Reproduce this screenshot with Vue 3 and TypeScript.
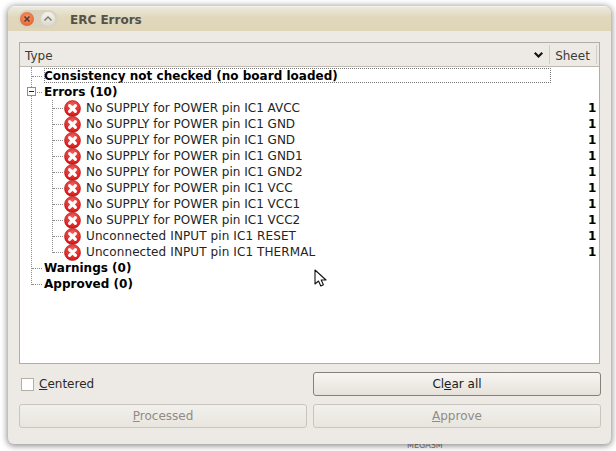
<script setup lang="ts">
interface Item { label: string; wide: boolean }
const items: Item[] = [
  'No SUPPLY for POWER pin IC1 AVCC',
  'No SUPPLY for POWER pin IC1 GND',
  'No SUPPLY for POWER pin IC1 GND',
  'No SUPPLY for POWER pin IC1 GND1',
  'No SUPPLY for POWER pin IC1 GND2',
  'No SUPPLY for POWER pin IC1 VCC',
  'No SUPPLY for POWER pin IC1 VCC1',
  'No SUPPLY for POWER pin IC1 VCC2',
  'Unconnected INPUT pin IC1 RESET',
  'Unconnected INPUT pin IC1 THERMAL',
].map((label) => ({ label, wide: label.startsWith('Unconnected') }))
</script>

<template>
  <div class="page">
    <div class="window">
      <header class="titlebar">
        <div class="controls">
          <span class="ctl close">
            <svg width="14" height="14" viewBox="0 0 14 14"><path d="M4.5 4.5l5 5M9.5 4.5l-5 5" stroke="#5a3a30" stroke-width="1.6" fill="none" /></svg>
          </span>
          <span class="ctl up">
            <svg width="14" height="14" viewBox="0 0 14 14"><path d="M3.5 8.5L7 5l3.5 3.5" stroke="#77746a" stroke-width="1.4" fill="none" /></svg>
          </span>
        </div>
        <span class="title">ERC Errors</span>
      </header>

      <div class="body">
        <section class="tree">
          <div class="head">
            <div class="col-type">
              <span>Type</span>
              <svg class="chev" width="9" height="7" viewBox="0 0 9 7"><path d="M0 1.5L1.5 0 4.5 3 7.5 0 9 1.5 4.5 6z" fill="#111" /></svg>
            </div>
            <div class="col-sheet">Sheet</div>
          </div>
          <div class="rows">
            <div class="vline outer"></div>
            <div class="vline inner"></div>
            <div class="row top"><span class="hline"></span><span class="bold focus">Consistency not checked (no board loaded)</span></div>
            <div class="row top">
              <span class="hline"></span>
              <span class="expander"><i></i></span>
              <span class="bold">Errors (10)</span>
            </div>
            <div v-for="(item, i) in items" :key="i" class="row child">
              <span class="hline2"></span>
              <svg class="err" width="17" height="17" viewBox="0 0 17 17">
                <defs>
                  <radialGradient id="redball" cx="50%" cy="30%" r="70%">
                    <stop offset="0" stop-color="#f4605a" />
                    <stop offset="1" stop-color="#d81414" />
                  </radialGradient>
                </defs>
                <circle cx="8.5" cy="8.5" r="8" fill="url(#redball)" stroke="#b81212" stroke-width="0.6" />
                <path d="M5.6 5.6l5.8 5.8M11.4 5.6l-5.8 5.8" stroke="#fff" stroke-width="3.2" stroke-linecap="round" fill="none" />
              </svg>
              <span class="label" :class="{ wide: item.wide }">{{ item.label }}</span>
              <span class="num">1</span>
            </div>
            <div class="row top"><span class="hline"></span><span class="bold">Warnings (0)</span></div>
            <div class="row top"><span class="hline"></span><span class="bold">Approved (0)</span></div>
          </div>
        </section>

        <div class="actions">
          <label class="check"><span class="box"></span><span><u>C</u>entered</span></label>
          <button class="btn strong">Cl<u>e</u>ar all</button>
          <button class="btn off"><u>P</u>rocessed</button>
          <button class="btn off"><u>A</u>pprove</button>
        </div>
      </div>
    </div>
    <svg class="cursor" width="14" height="20" viewBox="0 0 14 20"><path d="M1 1v14l3.5-3 2.3 5 2.6-1.2-2.2-4.8H12z" fill="#fff" stroke="#111" stroke-width="1.1" stroke-linejoin="round" /></svg>
    <span class="peek">MEGASM</span>
  </div>
</template>

<style>
html, body { margin: 0; background: #fff; }
</style>

<style scoped>
.page {
  position: relative;
  width: 616px;
  height: 451px;
  overflow: hidden;
  padding: 6px 5px 0 8px;
  box-sizing: border-box;
  font-family: "DejaVu Sans", sans-serif;
  font-size: 12px;
  color: #1a1a1a;
}
.window {
  position: relative;
  z-index: 1;
  width: 603px;
  height: 438px;
  border-radius: 7px 7px 6px 6px;
  background: #edeae5;
  box-shadow: 0 1px 6px 1px rgba(0, 0, 0, 0.45);
  display: flex;
  flex-direction: column;
  overflow: hidden;
}
.titlebar {
  height: 25px;
  flex: none;
  display: flex;
  align-items: center;
  padding-left: 10px;
  background: linear-gradient(#ece8dc, #e0d7bc 45%, #dfd6ba);
  border-top: 1px solid #f6f4ee;
  box-sizing: border-box;
}
.controls {
  display: flex;
  gap: 7px;
  padding: 2px 3px 2px 2px;
  border-radius: 11px;
  background: #d8d2bf;
  margin-right: 12px;
}
.ctl {
  width: 14px;
  height: 14px;
  border-radius: 50%;
  display: flex;
}
.close { background: radial-gradient(circle at 50% 40%, #f49a6c, #e0531f); }
.up { background: linear-gradient(#f5f3ee, #dcd8cf); }
.title {
  font-weight: bold;
  color: #565248;
  font-size: 12px;
  padding-top: 1px;
}
.body {
  flex: 1;
  display: flex;
  flex-direction: column;
  padding: 11px 11px 0;
}
.tree {
  height: 322px;
  box-sizing: border-box;
  border: 1px solid #b3aea5;
  background: #fff;
  flex: none;
  display: flex;
  flex-direction: column;
}
.head {
  display: flex;
  height: 24px;
  flex: none;
  background: #edeae5;
  border-bottom: 1px solid #bdb9b0;
  box-sizing: border-box;
  color: #3b3a36;
}
.col-type {
  flex: 1;
  display: flex;
  align-items: center;
  justify-content: space-between;
  padding: 2px 6px 0 5px;
}
.chev { margin-top: -1px; }
.col-sheet {
  width: 48px;
  box-sizing: border-box;
  margin: 2px 2px 2px 0;
  padding: 2px 1px 0 0;
  border-left: 1px solid #d2cec6;
  border-right: 1px solid #d2cec6;
  display: flex;
  align-items: center;
  justify-content: center;
}
.rows {
  position: relative;
  flex: 1;
  display: flex;
  flex-direction: column;
  padding-top: 1px;
}
.vline {
  position: absolute;
  width: 0;
  border-left: 1px dotted #8c8c8c;
}
.vline.outer { left: 11px; top: 0; height: 218px; }
.vline.inner { left: 32px; top: 33px; height: 153px; }
.row {
  position: relative;
  height: 16px;
  flex: none;
  display: flex;
  align-items: center;
  line-height: 16px;
  white-space: nowrap;
  color: #1f1f1f;
}
.top { padding-left: 24px; }
.hline {
  position: absolute;
  left: 12px;
  top: 8px;
  width: 10px;
  border-top: 1px dotted #8c8c8c;
}
.bold { font-weight: bold; color: #000; font-size: 12px; letter-spacing: 0.02px; }
.focus {
  align-self: flex-start;
  width: 507px;
  height: 15px;
  box-sizing: border-box;
  outline: 1px dotted #777;
  outline-offset: -1px;
  position: relative;
}
.expander {
  position: absolute;
  left: 7px;
  top: 3px;
  width: 9px;
  height: 9px;
  box-sizing: border-box;
  border: 1px solid #8e8e8e;
  background: #fff;
  display: flex;
  align-items: center;
  justify-content: center;
}
.expander i { display: block; width: 5px; height: 1px; background: #222; }
.child { padding-left: 44px; }
.hline2 {
  position: absolute;
  left: 33px;
  top: 8px;
  width: 10px;
  border-top: 1px dotted #8c8c8c;
}
.err { flex: none; position: relative; margin-right: 5px; }
.label { flex: 1; color: #242424; }
.label.wide { letter-spacing: 0.1px; }
.num { font-weight: bold; width: 9px; color: #000; margin-right: 2px; }
.actions {
  display: grid;
  grid-template-columns: 288px 288px;
  column-gap: 6px;
  row-gap: 8px;
  margin-top: 8px;
}
.check {
  display: flex;
  align-items: center;
  gap: 5px;
  padding-left: 2px;
  color: #2a2a2a;
}
.check span:last-child { margin-top: -1px; }
.box {
  width: 11px;
  height: 11px;
  border: 1px solid #b5b0a7;
  background: #fff;
}
.btn {
  height: 24px;
  padding: 0;
  font: inherit;
  font-size: 12px;
  border-radius: 3px;
  background: linear-gradient(#f7f5f2, #e6e2db);
}
.strong { border: 1px solid #85817a; color: #1a1a1a; }
.off { border: 1px solid #c9c5bc; color: #8f8c85; background: linear-gradient(#f2f0ec, #e8e5df); }
.cursor {
  position: absolute;
  left: 314px;
  top: 269px;
  z-index: 2;
}
.peek {
  position: absolute;
  left: 407px;
  top: 441px;
  font-size: 8px;
  color: #777;
  line-height: 10px;
}
</style>
